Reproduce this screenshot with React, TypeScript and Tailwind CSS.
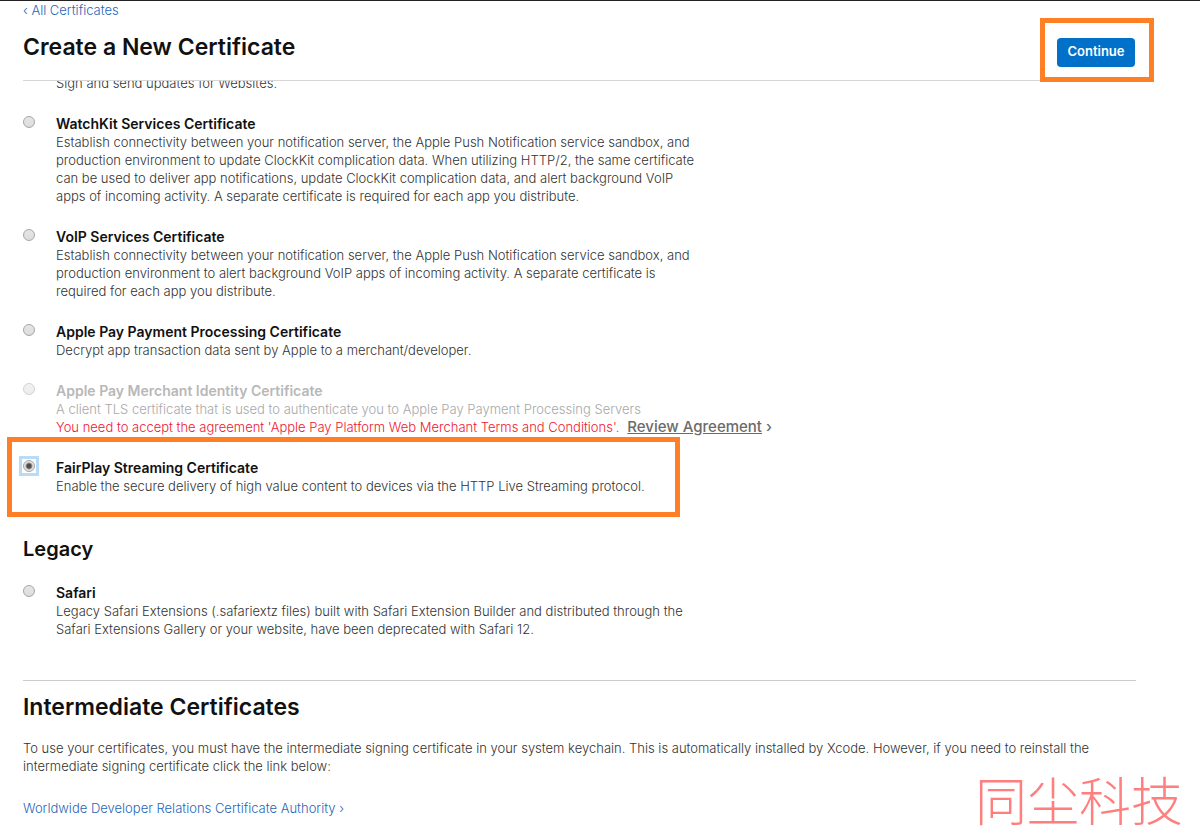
import { useState } from 'react'
import clsx from 'clsx'

type Certificate = {
  id: string
  name: string
  description: string
  error?: string
  disabled?: boolean
  highlighted?: boolean
}

const services: Certificate[] = [
  {
    id: 'watchkit',
    name: 'WatchKit Services Certificate',
    description:
      'Establish connectivity between your notification server, the Apple Push Notification service sandbox, and production environment to update ClockKit complication data. When utilizing HTTP/2, the same certificate can be used to deliver app notifications, update ClockKit complication data, and alert background VoIP apps of incoming activity. A separate certificate is required for each app you distribute.',
  },
  {
    id: 'voip',
    name: 'VoIP Services Certificate',
    description:
      'Establish connectivity between your notification server, the Apple Push Notification service sandbox, and production environment to alert background VoIP apps of incoming activity. A separate certificate is required for each app you distribute.',
  },
  {
    id: 'apple-pay',
    name: 'Apple Pay Payment Processing Certificate',
    description: 'Decrypt app transaction data sent by Apple to a merchant/developer.',
  },
  {
    id: 'merchant-identity',
    name: 'Apple Pay Merchant Identity Certificate',
    description:
      'A client TLS certificate that is used to authenticate you to Apple Pay Payment Processing Servers',
    error: "You need to accept the agreement 'Apple Pay Platform Web Merchant Terms and Conditions'.",
    disabled: true,
  },
  {
    id: 'fairplay',
    name: 'FairPlay Streaming Certificate',
    description:
      'Enable the secure delivery of high value content to devices via the HTTP Live Streaming protocol.',
    highlighted: true,
  },
]

const legacy: Certificate[] = [
  {
    id: 'safari',
    name: 'Safari',
    description:
      'Legacy Safari Extensions (.safariextz files) built with Safari Extension Builder and distributed through the Safari Extensions Gallery or your website, have been deprecated with Safari 12.',
  },
]

type OptionProps = {
  cert: Certificate
  checked: boolean
  onSelect: (id: string) => void
}

function CertificateOption({ cert, checked, onSelect }: OptionProps) {
  return (
    <li className="relative flex items-start gap-[21px]">
      <input
        type="radio"
        name="certificate"
        id={cert.id}
        checked={checked}
        disabled={cert.disabled}
        onChange={() => onSelect(cert.id)}
        className={clsx(
          'mt-[2px] size-3 shrink-0 appearance-none rounded-full border border-[#a6a6a6] disabled:opacity-50',
          checked
            ? 'bg-[radial-gradient(circle,#4d4d4d_2px,#e4e4e4_4px)]'
            : 'bg-linear-to-b from-[#e6e6e6] to-[#dcdcdc]',
        )}
      />
      {checked && (
        <span className="pointer-events-none absolute -top-[2px] -left-[4px] size-5 border-3 border-[#b9dbf5]" />
      )}
      <div className={cert.disabled ? 'text-[#a8a8a8]' : 'text-[#333]'}>
        <label
          htmlFor={cert.id}
          className={clsx(
            'block text-[14px] leading-[19px] font-semibold',
            cert.disabled ? 'text-[#b8b8b8]' : 'text-[#111]',
          )}
        >
          {cert.name}
        </label>
        <p className="max-w-[644px]">{cert.description}</p>
        {cert.error && (
          <p className="flex gap-2 whitespace-nowrap text-[#f0142f]">
            {cert.error}
            <a href="#" className="text-[15px] font-medium text-[#6b6b6b]">
              <span className="underline">Review Agreement</span> ›
            </a>
          </p>
        )}
      </div>
      {cert.highlighted && (
        <div className="pointer-events-none absolute -top-[21px] -bottom-[22px] -left-4 w-[673px] border-5 border-[#ff7f27]" />
      )}
    </li>
  )
}

export default function App() {
  const [selected, setSelected] = useState('fairplay')

  return (
    <div className="relative min-h-screen border-t border-[#222] bg-white pr-16 pl-[23px] font-['Inter','Noto_Sans_CJK_SC',sans-serif] text-[13px] leading-[18px] font-light text-[#333]">
      <header className="flex items-end justify-between border-b border-[#d6d6d6] pb-[13px]">
        <div>
          <a href="#" className="block text-[#1f66b8]">
            ‹ All Certificates
          </a>
          <h1 className="mt-[13px] mb-1 text-[23px] leading-[31px] font-semibold text-[#111]">
            Create a New Certificate
          </h1>
        </div>
        <div className="relative mr-px">
          <button
            type="button"
            className="block h-[29px] w-[78px] rounded-sm bg-[#0070c9] pb-[3px] text-[13px] font-semibold text-white"
          >
            Continue
          </button>
          <div className="pointer-events-none absolute -top-5 -right-[19px] -bottom-[15px] -left-[17px] border-5 border-[#ff7f27]" />
        </div>
      </header>

      <main>
        <div className="overflow-hidden">
          <p className="-mt-[7px] ml-[33px]">Sign and send updates for Websites.</p>
        </div>
        <ul className="mt-[22px] flex flex-col gap-[22px]">
          {services.map((cert) => (
            <CertificateOption
              key={cert.id}
              cert={cert}
              checked={selected === cert.id}
              onSelect={setSelected}
            />
          ))}
        </ul>

        <h2 className="mt-[42px] text-xl leading-6 font-semibold text-[#111]">Legacy</h2>
        <ul className="mt-[22px]">
          {legacy.map((cert) => (
            <CertificateOption
              key={cert.id}
              cert={cert}
              checked={selected === cert.id}
              onSelect={setSelected}
            />
          ))}
        </ul>

        <section className="mt-[42px] border-t border-[#ccc] pt-[11px]">
          <h2 className="text-[23px] leading-[31px] font-semibold text-[#111]">
            Intermediate Certificates
          </h2>
          <p className="mt-4 max-w-[1100px]">
            To use your certificates, you must have the intermediate signing certificate in your system
            keychain. This is automatically installed by Xcode. However, if you need to reinstall the
            intermediate signing certificate click the link below:
          </p>
          <a href="#" className="mt-6 inline-block text-[#1f66b8]">
            Worldwide Developer Relations Certificate Authority ›
          </a>
        </section>
      </main>

      <div className="pointer-events-none absolute right-[17px] bottom-2 font-['Noto_Sans_CJK_SC',sans-serif] text-[52px] leading-[60px] font-light text-[#ff7f7f]">
        同尘科技
      </div>
    </div>
  )
}
